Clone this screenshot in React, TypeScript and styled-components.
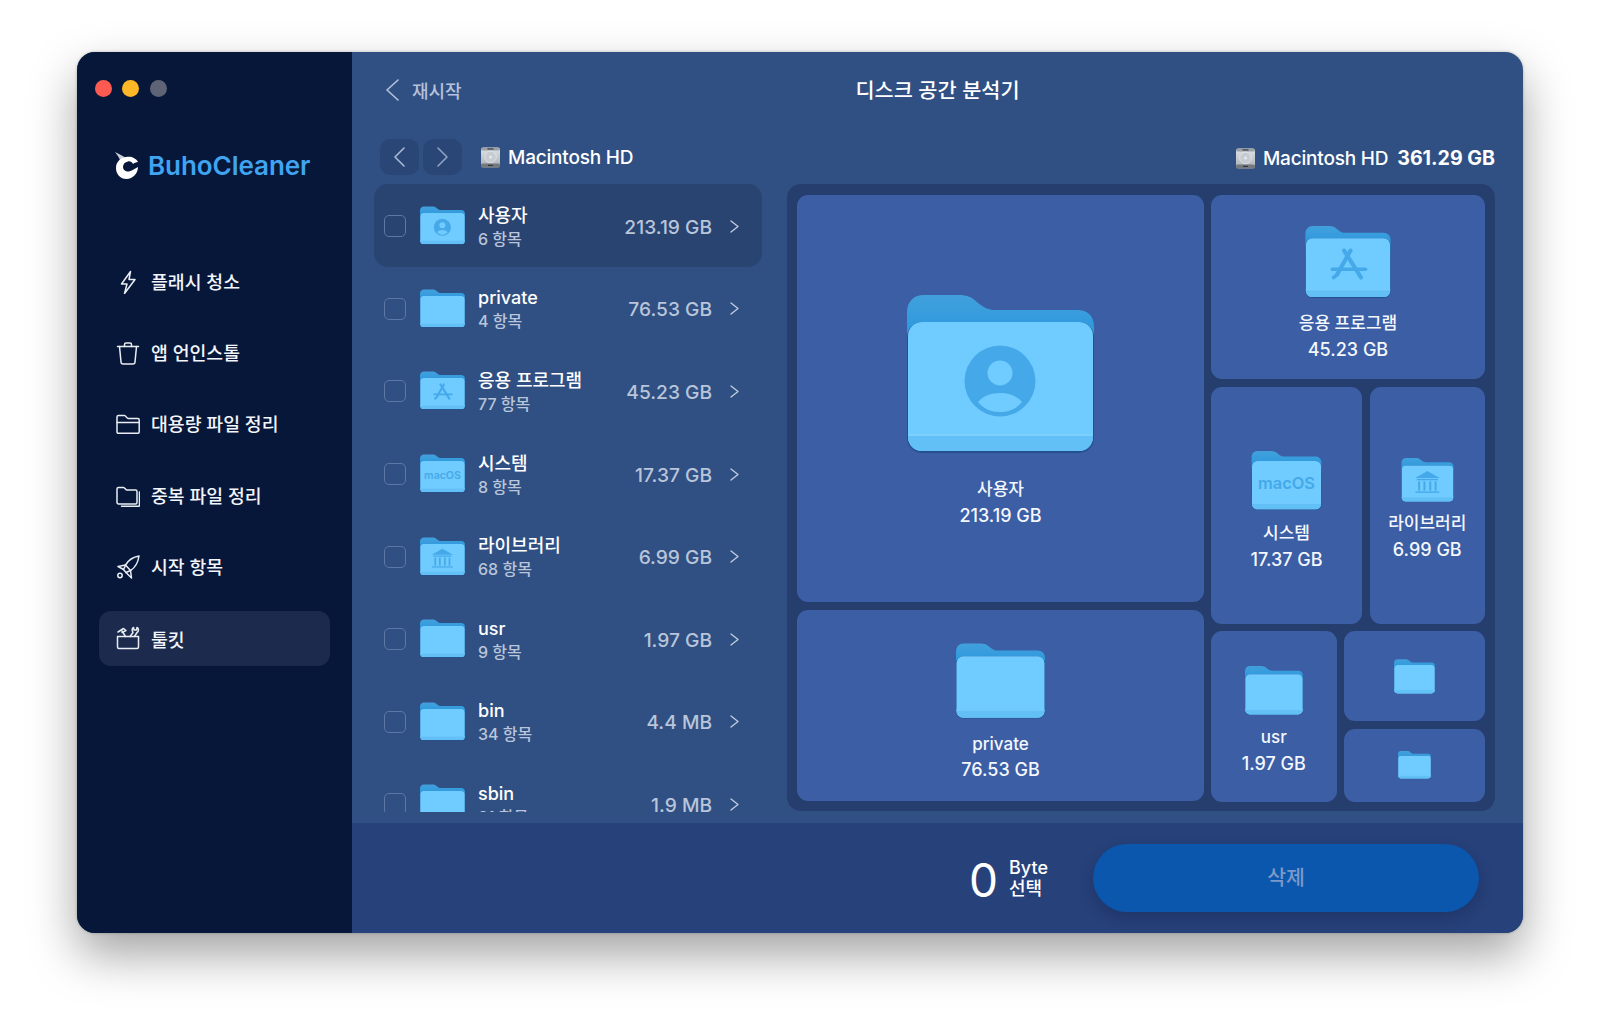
import React, { useId } from "react";
import styled, { createGlobalStyle } from "styled-components";

const Global = createGlobalStyle`
  html, body { margin: 0; padding: 0; background: #fff; }
  body { font-family: Inter, "Noto Sans CJK KR", sans-serif; -webkit-font-smoothing: antialiased; }
  * { box-sizing: border-box; }
`;

const Stage = styled.div`
  width: 1600px;
  height: 1035px;
  padding: 52px 0 0 77px;
  overflow: hidden;
`;
const Window = styled.div`
  width: 1446px;
  height: 881px;
  display: flex;
  border-radius: 18px;
  overflow: hidden;
  box-shadow: 0 22px 48px rgba(0, 0, 0, 0.36), 0 0 3px rgba(0, 0, 0, 0.25);
  background: #305083;
`;
const Sidebar = styled.aside`
  width: 275px;
  flex: none;
  background: #071739;
  padding-top: 28px;
  display: flex;
  flex-direction: column;
`;
const Lights = styled.div`
  display: flex;
  gap: 10.4px;
  margin-left: 18px;
`;
const Light = styled.span<{ $c: string }>`
  width: 17px;
  height: 17px;
  border-radius: 50%;
  background: ${(p) => p.$c};
`;
const Brand = styled.div`
  margin: 53px 0 0 38px;
  height: 30px;
  display: flex;
  align-items: center;
  gap: 9px;
`;
const BrandName = styled.span`
  font-size: 26px;
  font-weight: 600;
  letter-spacing: -0.05px;
  color: #3fa4f2;
`;
const Nav = styled.nav`
  margin: 74px 0 0 22px;
  width: 231px;
  display: flex;
  flex-direction: column;
  gap: 16.4px;
`;
const NavItem = styled.div<{ $active?: boolean }>`
  height: 55px;
  display: flex;
  align-items: center;
  gap: 11px;
  padding-left: 17px;
  border-radius: 12px;
  background: ${(p) => (p.$active ? "#1c2a4e" : "transparent")};
  color: #f2f5fa;
  font-size: 18.3px;
  font-weight: 500;
  svg { flex: none; }
`;
const NavText = styled.span<{ $active?: boolean }>`
  position: relative;
  top: ${(p) => (p.$active ? 1 : -1)}px;
`;
const Main = styled.main`
  flex: 1;
  display: flex;
  flex-direction: column;
  min-width: 0;
`;
const Header = styled.header`
  height: 77px;
  flex: none;
  position: relative;
  display: flex;
  align-items: center;
  justify-content: center;
  padding-bottom: 4px;
`;
const BackLink = styled.div`
  position: absolute;
  left: 34px;
  top: 25px;
  display: flex;
  align-items: center;
  gap: 13px;
  color: #b5c2da;
  font-size: 18px;
  font-weight: 500;
`;
const Title = styled.h1`
  margin: 0;
  font-size: 20.8px;
  font-weight: 500;
  color: #fff;
`;
const Toolbar = styled.div`
  height: 55px;
  flex: none;
  display: flex;
  align-items: flex-start;
  justify-content: space-between;
  padding: 10px 28px 0 28px;
`;
const ToolLeft = styled.div`
  display: flex;
  align-items: center;
`;
const NavBtn = styled.div`
  width: 39px;
  height: 36px;
  border-radius: 10px;
  background: #2a4676;
  display: flex;
  align-items: center;
  justify-content: center;
  margin-right: 4px;
`;
const DiskLabel = styled.div<{ $ml?: number }>`
  display: flex;
  align-items: center;
  gap: 7px;
  margin-left: ${(p) => p.$ml ?? 0}px;
  font-size: 19px;
  font-weight: 500;
  letter-spacing: -0.2px;
  color: #fff;
`;
const ToolRight = styled.div`
  display: flex;
  align-items: center;
  height: 38px;
  gap: 9px;
`;
const Strong = styled.span`
  font-weight: 700;
  font-size: 19.6px;
  color: #fff;
`;
const Content = styled.div`
  height: 627px;
  flex: none;
  display: flex;
  justify-content: space-between;
  padding: 0 28px 0 22px;
`;
const List = styled.div`
  width: 388px;
  height: 628px;
  overflow: hidden;
`;
const Row = styled.div<{ $active?: boolean }>`
  height: 82.6px;
  display: flex;
  align-items: center;
  padding: 0 23px 0 10px;
  border-radius: 14px;
  background: ${(p) => (p.$active ? "#2a4472" : "transparent")};
`;
const Check = styled.span`
  width: 22px;
  height: 22px;
  flex: none;
  border-radius: 5px;
  border: 1.5px solid #5d78a4;
  margin: 2px 14px 0 0;
`;
const RowFolder = styled.div`
  flex: none;
  width: 45px;
  height: 39px;
  margin: 1px 13px 0 0;
  display: flex;
`;
const RowText = styled.div`
  flex: 1;
  padding-top: 4px;
  min-width: 0;
`;
const RowName = styled.div`
  font-size: 18px;
  line-height: 22px;
  font-weight: 500;
  color: #fff;
`;
const RowSub = styled.div`
  margin-top: 1px;
  font-size: 16px;
  line-height: 22px;
  font-weight: 500;
  color: #b9c5da;
`;
const RowSize = styled.div`
  padding-top: 3px;
  font-size: 19.2px;
  font-weight: 500;
  color: #b9c5da;
  margin-right: 18px;
`;
const RowArrow = styled.div`
  display: flex;
  padding-top: 2px;
`;
const Treemap = styled.div`
  width: 708px;
  height: 627px;
  flex: none;
  background: #263e6d;
  border-radius: 14px;
  padding: 11px 10px;
  display: flex;
  gap: 7px;
`;
const Col = styled.div<{ $w: number }>`
  width: ${(p) => p.$w}px;
  flex: none;
  display: flex;
  flex-direction: column;
  gap: 7.5px;
`;
const Line = styled.div<{ $h: number }>`
  height: ${(p) => p.$h}px;
  flex: none;
  display: flex;
  gap: 7.5px;
`;
const Card = styled.div<{ $w?: number; $h?: number; $top: number }>`
  ${(p) => (p.$w ? `width: ${p.$w}px; flex: none;` : "flex: 1;")}
  ${(p) => (p.$h ? `height: ${p.$h}px; flex: none;` : "")}
  background: #3b5ea5;
  border-radius: 11px;
  padding-top: ${(p) => p.$top}px;
  display: flex;
  flex-direction: column;
  align-items: center;
  color: #fff;
`;
const CardFolder = styled.div<{ $w: number; $h: number; $gap: number }>`
  width: ${(p) => p.$w}px;
  height: ${(p) => p.$h}px;
  margin-bottom: ${(p) => p.$gap}px;
  flex: none;
  display: flex;
`;
const CardName = styled.div`
  font-size: 17px;
  line-height: 26.5px;
  font-weight: 500;
  color: #f4f7fc;
  white-space: nowrap;
`;
const CardSize = styled.div`
  font-size: 18px;
  line-height: 26.5px;
  font-weight: 500;
  color: #f4f7fc;
  white-space: nowrap;
`;
const Footer = styled.footer`
  margin-top: 12px;
  height: 110px;
  flex: none;
  background: #27417a;
  display: flex;
  align-items: center;
  justify-content: flex-end;
  padding: 0 44px 0 0;
`;
const Zero = styled.div`
  font-size: 46px;
  line-height: 50px;
  font-weight: 400;
  color: #fff;
  margin: 3px 11px 0 0;
`;
const Unit = styled.div`
  font-size: 18px;
  line-height: 21px;
  font-weight: 500;
  color: #fff;
  margin: 0 45px 0 0;
`;
const Delete = styled.div`
  width: 386px;
  height: 68px;
  border-radius: 34px;
  background: #0a57ad;
  color: #7e98c8;
  font-size: 20.5px;
  font-weight: 500;
  display: flex;
  align-items: center;
  justify-content: center;
  padding-bottom: 4px;
  box-shadow: 0 6px 14px rgba(10, 25, 60, 0.28);
`;

type Glyph = "user" | "app" | "mac" | "lib" | undefined;

function Folder({ glyph }: { glyph?: Glyph }) {
  const id = "g" + useId().replace(/[^a-zA-Z0-9]/g, "");
  const tone = "#45a9e9";
  return (
    <svg viewBox="0 0 187 158" width="100%" height="100%" aria-hidden="true">
      <defs>
        <linearGradient id={id} x1="0" y1="0" x2="0" y2="1">
          <stop offset="0" stopColor="#42a0dc" />
          <stop offset="0.55" stopColor="#2f9ade" />
          <stop offset="1" stopColor="#0a86d8" />
        </linearGradient>
      </defs>
      <path
        d="M0 18C0 7 6 0 17 0H52C60 0 65 2 71 8C78 13 81 15 88 15H170C181 15 187 21 187 32V60H0Z"
        fill={`url(#${id})`}
      />
      <rect x="0" y="27" width="187" height="131" rx="15" fill="#24508f" />
      <rect x="1" y="27" width="185" height="129" rx="14" fill="#70cbff" />
      <path d="M1 139H186V142C186 150 180 156 172 156H15C7 156 1 150 1 142Z" fill="#62c0f6" />
      <rect x="1" y="139" width="185" height="2" fill="#7bd0fd" />
      {glyph === "user" && (
        <g>
          <circle cx="93" cy="86" r="35.500" fill={tone} />
          <circle cx="93" cy="78" r="12.500" fill="#70cbff" />
          <path d="M71 107C76 101 84 98 93 98C102 98 110 101 115 107C109 114 102 117 93 117C84 117 77 114 71 107Z" fill="#70cbff" />
        </g>
      )}
      {glyph === "app" && (
        <g stroke={tone} strokeLinecap="round" fill="none">
          <path d="M99 54L70 106" strokeWidth="9" />
          <path d="M85 54L122 113" strokeWidth="9" />
          <path d="M59 95H132" strokeWidth="8" />
          <path d="M62 113L70 106" strokeWidth="8" />
        </g>
      )}
      {glyph === "mac" && (
        <text x="93.500" y="102" textAnchor="middle" fontFamily="Inter, sans-serif" fontWeight="600" fontSize="44" fill={tone}>
          macOS
        </text>
      )}
      {glyph === "lib" && (
        <g fill={tone}>
          <path d="M93 47L137 72H49Z" />
          <rect x="55" y="75" width="76" height="5" />
          <rect x="60" y="84" width="7" height="33" />
          <rect x="79" y="84" width="7" height="33" />
          <rect x="100" y="84" width="7" height="33" />
          <rect x="119" y="84" width="7" height="33" />
          <rect x="50" y="120" width="86" height="5" />
        </g>
      )}
    </svg>
  );
}

function Disk() {
  const id = "d" + useId().replace(/[^a-zA-Z0-9]/g, "");
  return (
    <svg width="21" height="21" viewBox="0 0 21 21" aria-hidden="true">
      <defs>
        <linearGradient id={id} x1="0" y1="0" x2="0" y2="1">
          <stop offset="0" stopColor="#dfe3e7" />
          <stop offset="1" stopColor="#a9afb6" />
        </linearGradient>
      </defs>
      <rect x="1" y="0.500" width="19" height="20" rx="2.500" fill={`url(#${id})`} />
      <rect x="1" y="0.500" width="19" height="3" rx="1.500" fill="#9aa0a6" />
      <rect x="7.500" y="1.200" width="6" height="1.400" fill="#4a4e53" />
      <circle cx="10.500" cy="10" r="5.800" fill="#c6ccd2" stroke="#e6e9ec" strokeWidth="0.700" />
      <circle cx="10.500" cy="10" r="1.500" fill="#e6e9ec" />
      <rect x="1" y="16.500" width="19" height="4" rx="1.500" fill="#74797e" />
      <rect x="8" y="17.800" width="5" height="1.200" fill="#36393c" />
    </svg>
  );
}

function Chevron({ left, size = 12, h = 22, color = "#b9c5da", sw = 1.6 }: { left?: boolean; size?: number; h?: number; color?: string; sw?: number }) {
  return (
    <svg width={size} height={h} viewBox={`0 0 ${size} ${h}`} fill="none" stroke={color} strokeWidth={sw} strokeLinecap="round" strokeLinejoin="round" aria-hidden="true">
      {left ? (
        <path d={`M${size - 1} 1L1 ${h / 2}L${size - 1} ${h - 1}`} />
      ) : (
        <path d={`M1 1L${size - 1} ${h / 2}L1 ${h - 1}`} />
      )}
    </svg>
  );
}

function Logo() {
  return (
    <svg width="24" height="27" viewBox="0 0 24 27" aria-hidden="true">
      <path d="M0 0C4 2 8 4 11 6L5 8C4 5 2 3 0 0Z" fill="#c8cfdc" />
      <path
        fillRule="evenodd"
        d="M11 5C16 4 21 6 23 10C21 10 19 11 18 12C17 10 15 9 13 9.500C10 10 8 12 8 15C8 18 11 20 14 19.500C17 19 19 17 23 15C23 21 18 27 11.500 27C5 27 1 22 1 16C1 10 5 6 11 5Z"
        fill="#fff"
      />
    </svg>
  );
}

const stroke = { fill: "none", stroke: "#e9edf4", strokeWidth: 1.5, strokeLinecap: "round" as const, strokeLinejoin: "round" as const };

const icons: Record<string, React.ReactNode> = {
  flash: <path d="M14.500 1.500L5.500 14H11L8.500 23.500L19 9.500H13Z" />,
  trash: (
    <>
      <path d="M1.500 5.500H22.500" />
      <path d="M8.500 5.500V3.500C8.500 2.500 9.200 2 10 2H14C14.800 2 15.500 2.500 15.500 3.500V5.500" />
      <path d="M3.500 5.500L5 21C5.100 22.300 6 23 7 23H17C18 23 18.900 22.300 19 21L20.500 5.500" />
    </>
  ),
  folder: (
    <>
      <path d="M1 5C1 4 1.800 3.500 2.500 3.500H8.500C10 3.500 10.500 6.500 12.500 6.500H22C22.600 6.500 23.200 7 23.200 8V20C23.200 20.700 22.600 21.200 22 21.200H2.300C1.600 21.200 1 20.700 1 20Z" />
      <path d="M1 10.500H23.200" />
    </>
  ),
  dup: (
    <>
      <path d="M1 5C1 4 1.600 3.500 2.500 3.500H7.500C9 3.500 9.500 6 11 6H19.500C20.300 6 21 6.600 21 7.500V18.500C21 19.300 20.300 20 19.500 20H2.500C1.600 20 1 19.300 1 18.500Z" />
      <path d="M23.500 8V21C23.500 21.800 23 22.300 22.200 22.300H5.500" />
    </>
  ),
  rocket: (
    <>
      <path d="M23 1C17 2 12.500 5 9.500 10L14.500 15.500C19.500 12.500 22 7.500 23 1Z" />
      <path d="M9.500 10L2 11.500L7.500 14.500" />
      <path d="M14.500 15.500L15.500 23L10 17.500" />
      <path d="M9.500 10.500L7.500 14.500L10 17.500L14.500 15.500" />
      <circle cx="4" cy="20.500" r="2.200" />
    </>
  ),
  kit: (
    <>
      <path d="M1.500 10.500H22.500V21C22.500 22 21.800 22.500 21 22.500H3C2.200 22.500 1.500 22 1.500 21Z" />
      <path d="M2 6L7.500 2.500L10 4.500L6 6.500M6 5L9.500 10.500" />
      <path d="M14 10.500L17 6.500C15.500 4.500 16 2 17.500 1.500L18 4L20.500 4L21 1.500C23 2.500 23 5.500 21 6.500L18.500 10.500" />
    </>
  ),
};

const nav = [
  ["flash", "플래시 청소"],
  ["trash", "앱 언인스톨"],
  ["folder", "대용량 파일 정리"],
  ["dup", "중복 파일 정리"],
  ["rocket", "시작 항목"],
  ["kit", "툴킷"],
];

const rows: { name: string; sub: string; size: string; glyph?: Glyph }[] = [
  { name: "사용자", sub: "6 항목", size: "213.19 GB", glyph: "user" },
  { name: "private", sub: "4 항목", size: "76.53 GB" },
  { name: "응용 프로그램", sub: "77 항목", size: "45.23 GB", glyph: "app" },
  { name: "시스템", sub: "8 항목", size: "17.37 GB", glyph: "mac" },
  { name: "라이브러리", sub: "68 항목", size: "6.99 GB", glyph: "lib" },
  { name: "usr", sub: "9 항목", size: "1.97 GB" },
  { name: "bin", sub: "34 항목", size: "4.4 MB" },
  { name: "sbin", sub: "31 항목", size: "1.9 MB" },
];

function Tile(p: { w?: number; h?: number; top: number; fw: number; fh: number; gap?: number; glyph?: Glyph; name?: string; size?: string }) {
  return (
    <Card $w={p.w} $h={p.h} $top={p.top}>
      <CardFolder $w={p.fw} $h={p.fh} $gap={p.gap ?? 0}>
        <Folder glyph={p.glyph} />
      </CardFolder>
      {p.name && <CardName>{p.name}</CardName>}
      {p.size && <CardSize>{p.size}</CardSize>}
    </Card>
  );
}

export default function App() {
  return (
    <Stage>
      <Global />
      <Window>
        <Sidebar>
          <Lights>
            <Light $c="#fd5b52" />
            <Light $c="#feb726" />
            <Light $c="#5f6376" />
          </Lights>
          <Brand>
            <Logo />
            <BrandName>BuhoCleaner</BrandName>
          </Brand>
          <Nav>
            {nav.map(([k, label]) => (
              <NavItem key={k} $active={k === "kit"}>
                <svg width="24" height="24" viewBox="0 0 24 24" {...stroke}>
                  {icons[k]}
                </svg>
                <NavText $active={k === "kit"}>{label}</NavText>
              </NavItem>
            ))}
          </Nav>
        </Sidebar>
        <Main>
          <Header>
            <BackLink>
              <Chevron left size={13} h={22} color="#b5c2da" />
              재시작
            </BackLink>
            <Title>디스크 공간 분석기</Title>
          </Header>
          <Toolbar>
            <ToolLeft>
              <NavBtn>
                <Chevron left size={11} h={20} color="#a9b8d2" />
              </NavBtn>
              <NavBtn>
                <Chevron size={11} h={20} color="#8ea1c2" />
              </NavBtn>
              <DiskLabel $ml={14}>
                <Disk />
                Macintosh HD
              </DiskLabel>
            </ToolLeft>
            <ToolRight>
              <DiskLabel>
                <Disk />
                Macintosh HD
              </DiskLabel>
              <Strong>361.29 GB</Strong>
            </ToolRight>
          </Toolbar>
          <Content>
            <List>
              {rows.map((r, i) => (
                <Row key={r.name} $active={i === 0}>
                  <Check />
                  <RowFolder>
                    <Folder glyph={r.glyph} />
                  </RowFolder>
                  <RowText>
                    <RowName>{r.name}</RowName>
                    <RowSub>{r.sub}</RowSub>
                  </RowText>
                  <RowSize>{r.size}</RowSize>
                  <RowArrow>
                    <Chevron size={9} h={13} color="#c3cee0" sw={1.3} />
                  </RowArrow>
                </Row>
              ))}
            </List>
            <Treemap>
              <Col $w={407}>
                <Tile h={407} top={100} fw={187} fh={158} gap={23} glyph="user" name="사용자" size="213.19 GB" />
                <Tile h={191} top={33} fw={89} fh={76} gap={12} name="private" size="76.53 GB" />
              </Col>
              <Col $w={274}>
                <Tile h={184} top={31} fw={86} fh={72} gap={12} glyph="app" name="응용 프로그램" size="45.23 GB" />
                <Line $h={237}>
                  <Tile w={151} top={64} fw={71} fh={59} gap={10.5} glyph="mac" name="시스템" size="17.37 GB" />
                  <Tile top={71} fw={53} fh={44} gap={8.5} glyph="lib" name="라이브러리" size="6.99 GB" />
                </Line>
                <Line $h={170.5}>
                  <Tile w={125.5} top={35} fw={58} fh={49} gap={9} name="usr" size="1.97 GB" />
                  <Col $w={141}>
                    <Tile h={90} top={28} fw={41} fh={35} />
                    <Tile h={73} top={22} fw={33} fh={28} />
                  </Col>
                </Line>
              </Col>
            </Treemap>
          </Content>
          <Footer>
            <Zero>0</Zero>
            <Unit>
              Byte
              <br />
              선택
            </Unit>
            <Delete>삭제</Delete>
          </Footer>
        </Main>
      </Window>
    </Stage>
  );
}
